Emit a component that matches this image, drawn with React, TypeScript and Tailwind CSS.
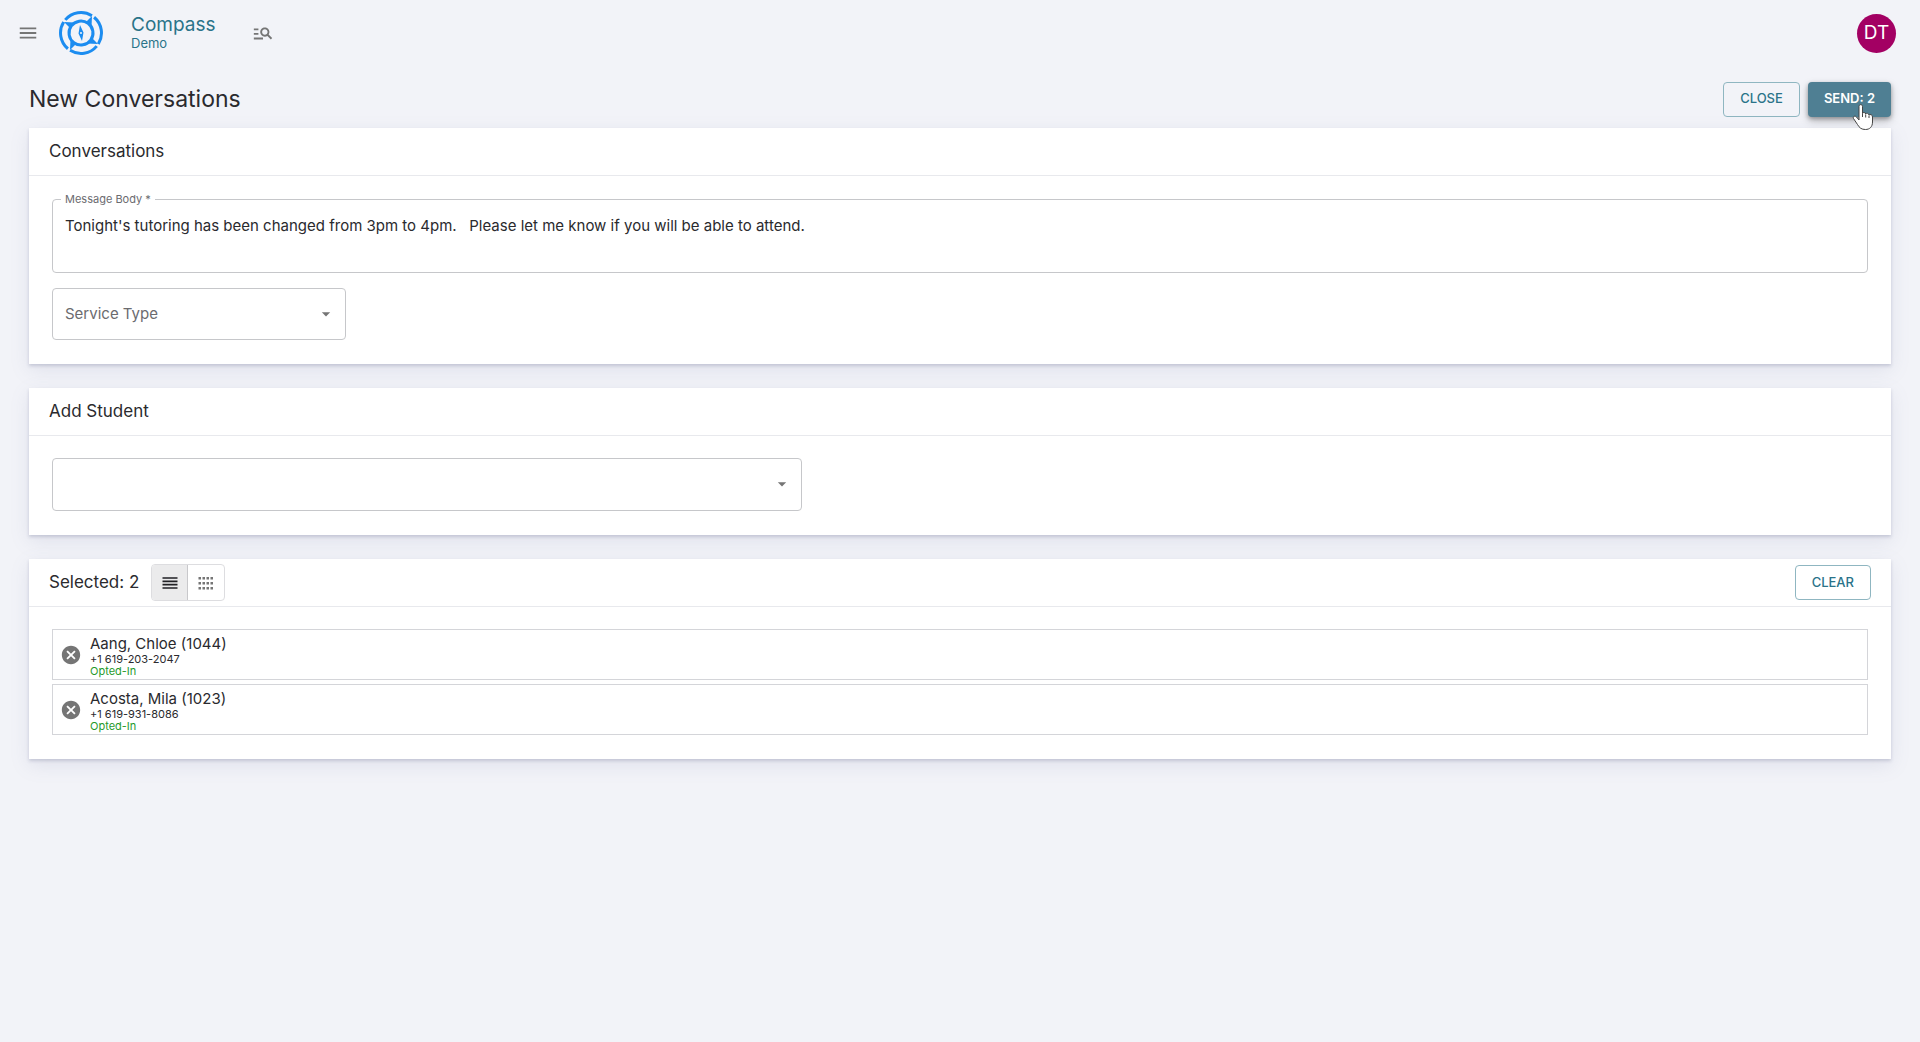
import { useState } from 'react';
import type { ReactNode } from 'react';
import { MdArrowDropDown, MdCancel, MdManageSearch, MdMenu, MdReorder } from 'react-icons/md';

interface Student {
  id: number;
  name: string;
  phone: string;
  status: string;
}

const initialStudents: Student[] = [
  { id: 1044, name: 'Aang, Chloe', phone: '+1 619-203-2047', status: 'Opted-In' },
  { id: 1023, name: 'Acosta, Mila', phone: '+1 619-931-8086', status: 'Opted-In' },
];

function CompassLogo() {
  return (
    <svg viewBox="0 0 44 44" className="h-11 w-11" fill="none" aria-hidden="true">
      {/* Outer ring, split in four */}
      <g stroke="#1c8cf0" strokeWidth="3" transform="rotate(-9 22 22)">
        <path d="M8.5 6.6A20.5 20.5 0 0 1 35.5 6.6" />
        <path d="M37.4 8.5A20.5 20.5 0 0 1 37.4 35.5" />
        <path d="M35.5 37.4A20.5 20.5 0 0 1 8.5 37.4" />
        <path d="M6.6 35.5A20.5 20.5 0 0 1 6.6 8.5" />
        <circle cx="22" cy="22" r="12" />
      </g>
      {/* Diagonal points */}
      <g fill="#1c8cf0">
        <path d="M5 11L16 11.500L11 17Z" />
        <path d="M33 5L32.500 16L27 11Z" />
        <path d="M39 33L28 32.500L33 27Z" />
        <path d="M11 39L11.500 28L17 33Z" />
        <path fillRule="evenodd" d="M21 14L24.500 21.500L23 30L19.500 22.500ZM22 21A1 1 0 1 0 22 23A1 1 0 1 0 22 21Z" />
      </g>
    </svg>
  );
}

function DotGridIcon() {
  return (
    <svg viewBox="0 0 16 14" className="h-3.5 w-4" fill="currentColor" aria-hidden="true">
      {[1, 6, 11].map((y) =>
        [0, 4, 8, 12].map((x) => <rect key={`${x}-${y}`} x={x + 0.5} y={y} width="2.5" height="2.5" />)
      )}
    </svg>
  );
}

function HandCursor() {
  return (
    <svg viewBox="0 0 22 28" className="pointer-events-none absolute -bottom-3.5 right-4 h-7 w-6" aria-hidden="true">
      <path
        d="M7 3.500C7 1 10.500 1 10.500 3.500V10.500C11 9 13.500 9.200 13.700 11C14.500 9.800 16.700 10.200 17 12C18 11 20.500 11.500 20.500 14V19C20.500 24 17.500 26.500 13.500 26.500C9.500 26.500 7.500 25 5.500 21.500L1.500 15.500C0.500 13.500 3 12.300 4.500 14L7 17Z"
        fill="#fff"
        stroke="#444"
        strokeWidth="1"
        strokeLinejoin="round"
      />
      <path d="M10.500 10.500V14M13.700 11.500V14.500M17 12.500V15" stroke="#444" strokeWidth="1" />
    </svg>
  );
}

function Card({ header, children }: { header: ReactNode; children: ReactNode }) {
  return (
    <section className="bg-white shadow-[0_2px_3px_rgba(100,105,140,0.25),0_6px_18px_rgba(120,130,170,0.15)]">
      <div className="flex h-12 items-center border-b border-[#e8e9ed] px-5">{header}</div>
      <div className="px-[23px] pt-[22px] pb-6">{children}</div>
    </section>
  );
}

export default function App() {
  const [message, setMessage] = useState(
    "Tonight's tutoring has been changed from 3pm to 4pm.   Please let me know if you will be able to attend."
  );
  const [students, setStudents] = useState(initialStudents);
  const [view, setView] = useState<'list' | 'grid'>('list');

  return (
    <div className="min-h-screen bg-[#f2f3f8] font-['Inter',sans-serif] text-[#2a2a2e]">
      {/* Top bar */}
      <header className="flex h-[66px] items-center px-4">
        <button aria-label="Open menu" className="flex h-6 w-6 items-center justify-center text-[#757575]">
          <MdMenu className="h-[22px] w-[22px]" />
        </button>
        <a href="#" className="ml-[19px] flex items-center gap-7 text-[#2a7389]">
          <CompassLogo />
          <span className="flex flex-col">
            <span className="text-[19px] leading-5">Compass</span>
            <span className="text-[13px] leading-4">Demo</span>
          </span>
        </a>
        <button aria-label="Search" className="ml-9 flex h-6 w-6 items-center justify-center text-[#757575]">
          <MdManageSearch className="h-[22px] w-[22px]" />
        </button>
        <button
          aria-label="Account"
          className="mr-2 ml-auto flex h-[39px] w-[39px] items-center justify-center rounded-full bg-[#a30063] text-[19px] text-white"
        >
          DT
        </button>
      </header>

      <main className="px-[29px]">
        <div className="flex h-[62px] items-center justify-between pt-1">
          <h1 className="text-[23px]">New Conversations</h1>
          <div className="flex gap-2">
            <button className="h-[35px] rounded border border-[#8fb6c1] px-4 text-[13px] font-medium text-[#2a7389]">
              CLOSE
            </button>
            <button className="relative h-[35px] rounded bg-[#4f7f93] px-4 text-[13px] font-semibold text-white shadow-[0_2px_4px_rgba(0,0,0,0.3),0_4px_10px_rgba(0,0,0,0.2)]">
              SEND: {students.length}
              <HandCursor />
            </button>
          </div>
        </div>

        <div className="flex flex-col gap-6">
          <Card header={<h2 className="text-[17px]">Conversations</h2>}>
            <fieldset className="-mt-[7px] h-[82px] rounded border border-[#c6c7ca] px-3">
              <legend className="-ml-1 px-1 text-[11px] leading-4 text-[#6b6b6f]">
                <label htmlFor="message-body">Message Body *</label>
              </legend>
              <textarea
                id="message-body"
                required
                rows={2}
                value={message}
                onChange={(e) => setMessage(e.target.value)}
                className="block w-full resize-none bg-transparent pt-2 text-[15px] leading-[22px] outline-none"
              />
            </fieldset>
            <div className="relative mt-[15px] w-[294px]">
              <select
                aria-label="Service Type"
                className="block h-[52px] w-full appearance-none rounded border border-[#c6c7ca] bg-transparent px-3 text-[15px] text-[#6b6b6f]"
              >
                <option>Service Type</option>
              </select>
              <MdArrowDropDown className="pointer-events-none absolute top-4 right-2.5 h-5 w-5 text-[#757575]" />
            </div>
          </Card>

          <Card header={<h2 className="text-[17px]">Add Student</h2>}>
            <div className="relative w-[750px] max-w-full">
              <input
                type="text"
                role="combobox"
                aria-label="Add Student"
                aria-expanded={false}
                className="block h-[53px] w-full rounded border border-[#c6c7ca] bg-transparent px-3 pr-10 text-[15px]"
              />
              <MdArrowDropDown className="pointer-events-none absolute top-4 right-2.5 h-5 w-5 text-[#757575]" />
            </div>
          </Card>

          <Card
            header={
              <>
                <h2 className="text-[17px]">Selected: {students.length}</h2>
                <div className="ml-3 flex h-[37px] overflow-hidden rounded border border-[#dddde0]">
                  <button
                    aria-label="List view"
                    aria-pressed={view === 'list'}
                    onClick={() => setView('list')}
                    className={`flex w-9 items-center justify-center border-r border-[#c8c8cb] ${
                      view === 'list' ? 'bg-[#ebebec] text-[#212124]' : 'text-[#757575]'
                    }`}
                  >
                    <MdReorder className="h-5 w-5" />
                  </button>
                  <button
                    aria-label="Grid view"
                    aria-pressed={view === 'grid'}
                    onClick={() => setView('grid')}
                    className={`flex w-9 items-center justify-center ${
                      view === 'grid' ? 'bg-[#ebebec] text-[#212124]' : 'text-[#757575]'
                    }`}
                  >
                    <DotGridIcon />
                  </button>
                </div>
                <button
                  onClick={() => setStudents([])}
                  className="ml-auto h-[35px] rounded border border-[#8fb6c1] px-4 text-[13px] font-medium text-[#2a7389]"
                >
                  CLEAR
                </button>
              </>
            }
          >
            <ul className={view === 'grid' ? 'grid grid-cols-4 gap-1' : 'flex flex-col gap-1'}>
              {students.map((student) => (
                <li key={student.id} className="flex h-[51px] items-center border border-[#d4d5d9] px-[7px]">
                  <button
                    aria-label={`Remove ${student.name}`}
                    onClick={() => setStudents(students.filter((s) => s.id !== student.id))}
                    className="mr-2 text-[#757575]"
                  >
                    <MdCancel className="h-[22px] w-[22px]" />
                  </button>
                  <div className="pt-0.5">
                    <p className="text-[15px] leading-[18px]">
                      {student.name} ({student.id})
                    </p>
                    <p className="text-[11px] leading-3">{student.phone}</p>
                    <p className="text-[11px] leading-3 text-[#1f9a2c]">{student.status}</p>
                  </div>
                </li>
              ))}
            </ul>
          </Card>
        </div>
      </main>
    </div>
  );
}
